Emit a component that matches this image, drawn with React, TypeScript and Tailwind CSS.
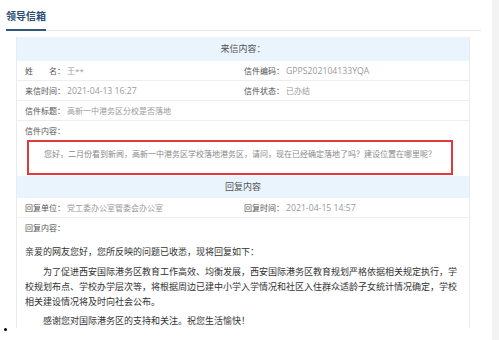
import React from "react";

// values that are only latin text/digits render a touch larger in the reference
const isLatin = (s: string) => /^[\x00-\x7f]+$/.test(s);

const Row = ({
  left,
  right,
}: {
  left: [string, string];
  right?: [string, string];
}) => (
  <div className="flex h-[20px] items-center border-b border-[#eeeeee] pl-[8px] text-[8px] leading-[20px]">
    <div className="w-[219px] whitespace-nowrap">
      <span className="text-[#555555]">{left[0]}</span>
      <span className={`ml-[2px] text-[#9a9a9a] ${isLatin(left[1]) ? "text-[8.7px]" : ""}`}>{left[1]}</span>
    </div>
    {right && (
      <div className="whitespace-nowrap">
        <span className="text-[#555555]">{right[0]}</span>
        <span className={`ml-[2px] text-[#9a9a9a] ${isLatin(right[1]) ? "text-[8.7px]" : ""}`}>{right[1]}</span>
      </div>
    )}
  </div>
);

export default function App() {
  return (
    <div className="relative flex h-[340px] w-[499px] overflow-hidden bg-white font-['Open_Sans','Noto_Sans_CJK_SC',sans-serif]">
      <div className="w-[492px]">
        {/* title tab */}
        <div className="ml-[6px] mr-[11px] flex border-b border-[#e6e6e6] pt-[10px]">
          <span className="-mb-px h-[21px] border-b-2 border-[#34567c] text-[10px] font-bold leading-[12px] text-[#2b4c72]">
            领导信箱
          </span>
        </div>

        {/* letter panel */}
        <div className="ml-[16px] mt-[6px] w-[454px] border-x border-[#e8ecef]">
          <div className="h-[24px] bg-[#eaf4fc] text-center text-[9px] leading-[24px] text-[#555555]">
            来信内容：
          </div>
          <Row left={["姓\u3000\u3000名：", "王**"]} right={["信件编码：", "GPPS202104133YQA"]} />
          <Row left={["来信时间：", "2021-04-13 16:27"]} right={["信件状态：", "已办结"]} />
          <Row left={["信件标题：", "高新一中港务区分校是否落地"]} />
          <div className="h-[19px] pl-[8px] text-[8px] leading-[19px] text-[#555555]">信件内容：</div>
          <div className="ml-[10px] h-[35px] w-[426px] border-2 border-[#e0393e] pt-[4px] text-center text-[8px] leading-[16px] text-[#8a8a8a]">
            您好，二月份看到新闻，高新一中港务区学校落地港务区，请问，现在已经确定落地了吗？建设位置在哪里呢？
          </div>

          <div className="mt-px h-[22px] bg-[#eaf4fc] text-center text-[9px] leading-[22px] text-[#555555]">
            回复内容
          </div>
          <Row left={["回复单位：", "党工委办公室管委会办公室"]} right={["回复时间：", "2021-04-15 14:57"]} />
          <div className="h-[20px] pl-[8px] text-[8px] leading-[20px] text-[#555555]">回复内容：</div>

          <div className="px-[8px] pt-[6px] text-[9px] leading-[15px] text-[#333333]">
            <p>亲爱的网友您好，您所反映的问题已收悉，现将回复如下：</p>
            <p className="mt-[5px] indent-[18px]">
              为了促进西安国际港务区教育工作高效、均衡发展，西安国际港务区教育规划严格依据相关规定执行，学校规划布点、学校办学层次等，将根据周边已建中小学入学情况和社区入住群众适龄子女统计情况确定，学校相关建设情况将及时向社会公布。
            </p>
            <p className="mt-[4px] indent-[18px]">感谢您对国际港务区的支持和关注。祝您生活愉快！</p>
          </div>
        </div>
      </div>
      <div className="w-[7px] bg-[#f3f3f3]" />
      <span className="absolute left-[4px] top-[328px] h-[3px] w-[3px] rounded-full bg-black" />
    </div>
  );
}
